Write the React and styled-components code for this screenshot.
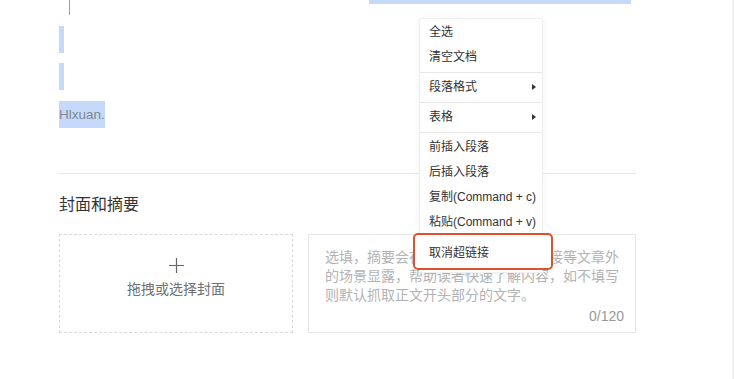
import React from "react";
import styled, { createGlobalStyle } from "styled-components";

const Global = createGlobalStyle`
  html, body { margin: 0; padding: 0; background: #fff; }
  body {
    font-family: "Liberation Sans", "Noto Sans CJK SC", sans-serif;
    -webkit-font-smoothing: antialiased;
  }
  #root { width: 734px; height: 379px; overflow: hidden; }
`;

const Page = styled.div`
  position: relative;
  display: flex;
  width: 734px;
  height: 379px;
  overflow: hidden;
`;

const Main = styled.div`
  flex: 1;
  padding-left: 59px;
`;

const ScrollTrack = styled.div`
  width: 2px;
  background: #f1f1f1;
`;

const Column = styled.div`
  width: 577px;
  display: flex;
  flex-direction: column;
`;

const TopRow = styled.div`
  display: flex;
  align-items: flex-start;
  height: 15px;
`;

const Caret = styled.div`
  width: 1px;
  height: 15px;
  margin-left: 10px;
  background: #86c140;
`;

const SelectedLine = styled.div`
  height: 4px;
  width: ${(p) => p.$w}px;
  margin-left: ${(p) => p.$ml}px;
  background: #c5d9fb;
`;

const Para = styled.div`
  margin-top: ${(p) => p.$mt}px;
  height: 27px;
  line-height: 27px;
  display: flex;
`;

const Highlight = styled.span`
  display: inline-block;
  min-width: 5px;
  height: 27px;
  background: #c5d9fb;
  color: #7f8890;
  font-size: 13.5px;
  font-family: "Liberation Sans", "Noto Sans CJK SC", sans-serif;
`;

const Rule = styled.div`
  height: 1px;
  background: #e8e8e8;
  margin-top: 45px;
`;

const Heading = styled.h3`
  margin: 17px 0 0;
  font-size: 16px;
  line-height: 24px;
  font-weight: 400;
  color: #333;
  font-family: "Noto Sans CJK SC", sans-serif;
`;

const Cards = styled.div`
  display: flex;
  gap: 15px;
  margin-top: 19px;
`;

const CoverDrop = styled.div`
  box-sizing: border-box;
  width: 234px;
  height: 99px;
  border: 1px dashed #d9d9d9;
  display: flex;
  flex-direction: column;
  align-items: center;
  padding-top: 22px;
  color: #777;
`;

const CoverLabel = styled.div`
  margin-top: 4px;
  font-size: 14px;
  line-height: 20px;
  font-family: "Noto Sans CJK SC", sans-serif;
  color: #707070;
`;

const Digest = styled.div`
  box-sizing: border-box;
  width: 328px;
  height: 99px;
  border: 1px solid #e6e6e6;
  padding: 12px 16px 0 16px;
  display: flex;
  flex-direction: column;
`;

const Placeholder = styled.div`
  font-size: 14px;
  line-height: 19px;
  color: #b3b3b3;
  font-family: "Noto Sans CJK SC", sans-serif;
  width: 296px;
`;

const Counter = styled.div`
  margin-top: auto;
  margin-bottom: 6px;
  align-self: flex-end;
  margin-right: -5px;
  font-size: 14px;
  line-height: 20px;
  color: #999;
`;

const Menu = styled.div`
  position: absolute;
  left: 419px;
  top: 18px;
  width: 124px;
  padding: 0.5px 0 2px;
  background: #fff;
  border: 1px solid #f0f0f0;
  border-radius: 2px;
  box-shadow: 0 1px 6px rgba(0, 0, 0, 0.06);
  box-sizing: border-box;
`;

const Item = styled.div`
  position: relative;
  height: 25px;
  line-height: 25px;
  padding-left: 9px;
  font-size: 12px;
  color: #333;
  white-space: nowrap;
  font-family: "Liberation Sans", "Noto Sans CJK SC", sans-serif;
`;

const OutlinedItem = styled(Item)`
  z-index: 1;
  box-sizing: border-box;
  height: 37px;
  line-height: 33px;
  margin: -1.5px -11px 0 -7px;
  padding-left: 14px;
  border: 2px solid #e0512b;
  border-radius: 5px;
  background: #fff;
  font-family: "Noto Sans CJK SC", sans-serif;
`;

const Arrow = styled.span`
  position: absolute;
  right: 6px;
  top: 9px;
  width: 0;
  height: 0;
  border-left: 4px solid #333;
  border-top: 3.5px solid transparent;
  border-bottom: 3.5px solid transparent;
`;

const Sep = styled.div`
  height: 1px;
  margin: 2px 0;
  background: #e6e6e6;
`;

const PlusIcon = () => (
  <svg width="17" height="17" viewBox="0 0 17 17">
    <path d="M8.5 1v15M1 8.5h15" stroke="#666" strokeWidth="1.2" fill="none" />
  </svg>
);

export default function App() {
  return (
    <>
      <Global />
      <Page>
        <Main>
          <Column>
            <TopRow>
              <Caret />
              <SelectedLine $ml={299} $w={262} />
            </TopRow>
            <Para $mt={11}>
              <Highlight />
            </Para>
            <Para $mt={10}>
              <Highlight />
            </Para>
            <Para $mt={11}>
              <Highlight>Hlxuan.</Highlight>
            </Para>
            <Rule />
            <Heading>封面和摘要</Heading>
            <Cards>
              <CoverDrop>
                <PlusIcon />
                <CoverLabel>拖拽或选择封面</CoverLabel>
              </CoverDrop>
              <Digest>
                <Placeholder>
                  选填，摘要会在订阅号消息、转发链接等文章外的场景显露，帮助读者快速了解内容，如不填写则默认抓取正文开头部分的文字。
                </Placeholder>
                <Counter>0/120</Counter>
              </Digest>
            </Cards>
          </Column>
        </Main>
        <ScrollTrack />
        <Menu>
          <Item>全选</Item>
          <Item>清空文档</Item>
          <Sep />
          <Item>
            段落格式
            <Arrow />
          </Item>
          <Sep />
          <Item>
            表格
            <Arrow />
          </Item>
          <Sep />
          <Item>前插入段落</Item>
          <Item>后插入段落</Item>
          <Item>复制(Command + c)</Item>
          <Item>粘贴(Command + v)</Item>
          <OutlinedItem>取消超链接</OutlinedItem>
        </Menu>
      </Page>
    </>
  );
}
